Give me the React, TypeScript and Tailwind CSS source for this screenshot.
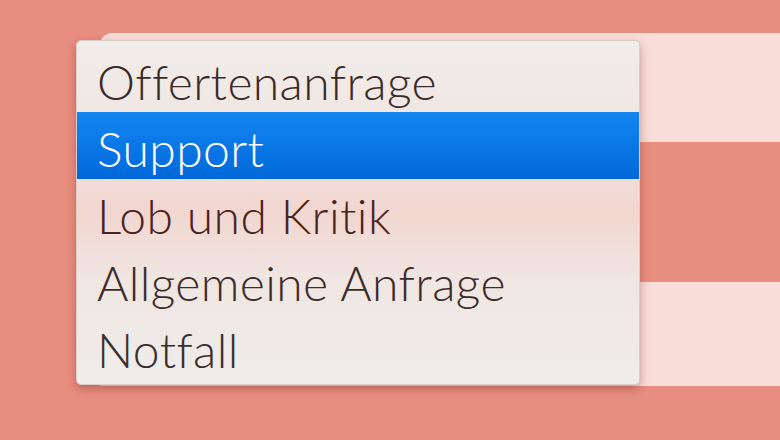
import React from "react";

const items = [
  { label: "Offertenanfrage", selected: false, color: "text-[#3a2b29]" },
  { label: "Support", selected: true, color: "text-white" },
  { label: "Lob und Kritik", selected: false, color: "text-[#4a2420]" },
  { label: "Allgemeine Anfrage", selected: false, color: "text-[#3d2c2a]" },
  { label: "Notfall", selected: false, color: "text-[#3a2f2d]" },
];

export default function App() {
  return (
    <div className="relative w-[780px] h-[440px] overflow-hidden bg-[#e88e80]">
      <div className="flex flex-col pt-[33px] pl-[100px]">
        <div className="h-[109px] rounded-tl-[12px] bg-[#f9ddd9]" />
        <div className="h-[140px]" />
        <div className="h-[104px] bg-[#f9ddd9]" />
      </div>

      <div
        className="absolute left-[76px] top-[40px] w-[564px] h-[345px] rounded-[5px] border border-[#dccbc7] py-[4px] shadow-[0_4px_10px_rgba(120,40,30,0.4)] bg-[linear-gradient(180deg,#f0edea_0%,#f1e6e2_25%,#f2d6d0_50%,#f0e6e2_70%,#efedea_100%)]"
        style={{ fontFamily: "Lato, 'Open Sans', sans-serif" }}
      >
        {items.map((it) => (
          <div
            key={it.label}
            className={`h-[67px] flex items-center pl-[20px] pt-[6px] text-[48px] font-light tracking-[0.4px] ${it.color} ${
              it.selected ? "bg-[linear-gradient(180deg,#1485f0_0%,#0a77e6_50%,#0069d9_100%)]" : ""
            }`}
          >
            {it.label}
          </div>
        ))}
      </div>
    </div>
  );
}
